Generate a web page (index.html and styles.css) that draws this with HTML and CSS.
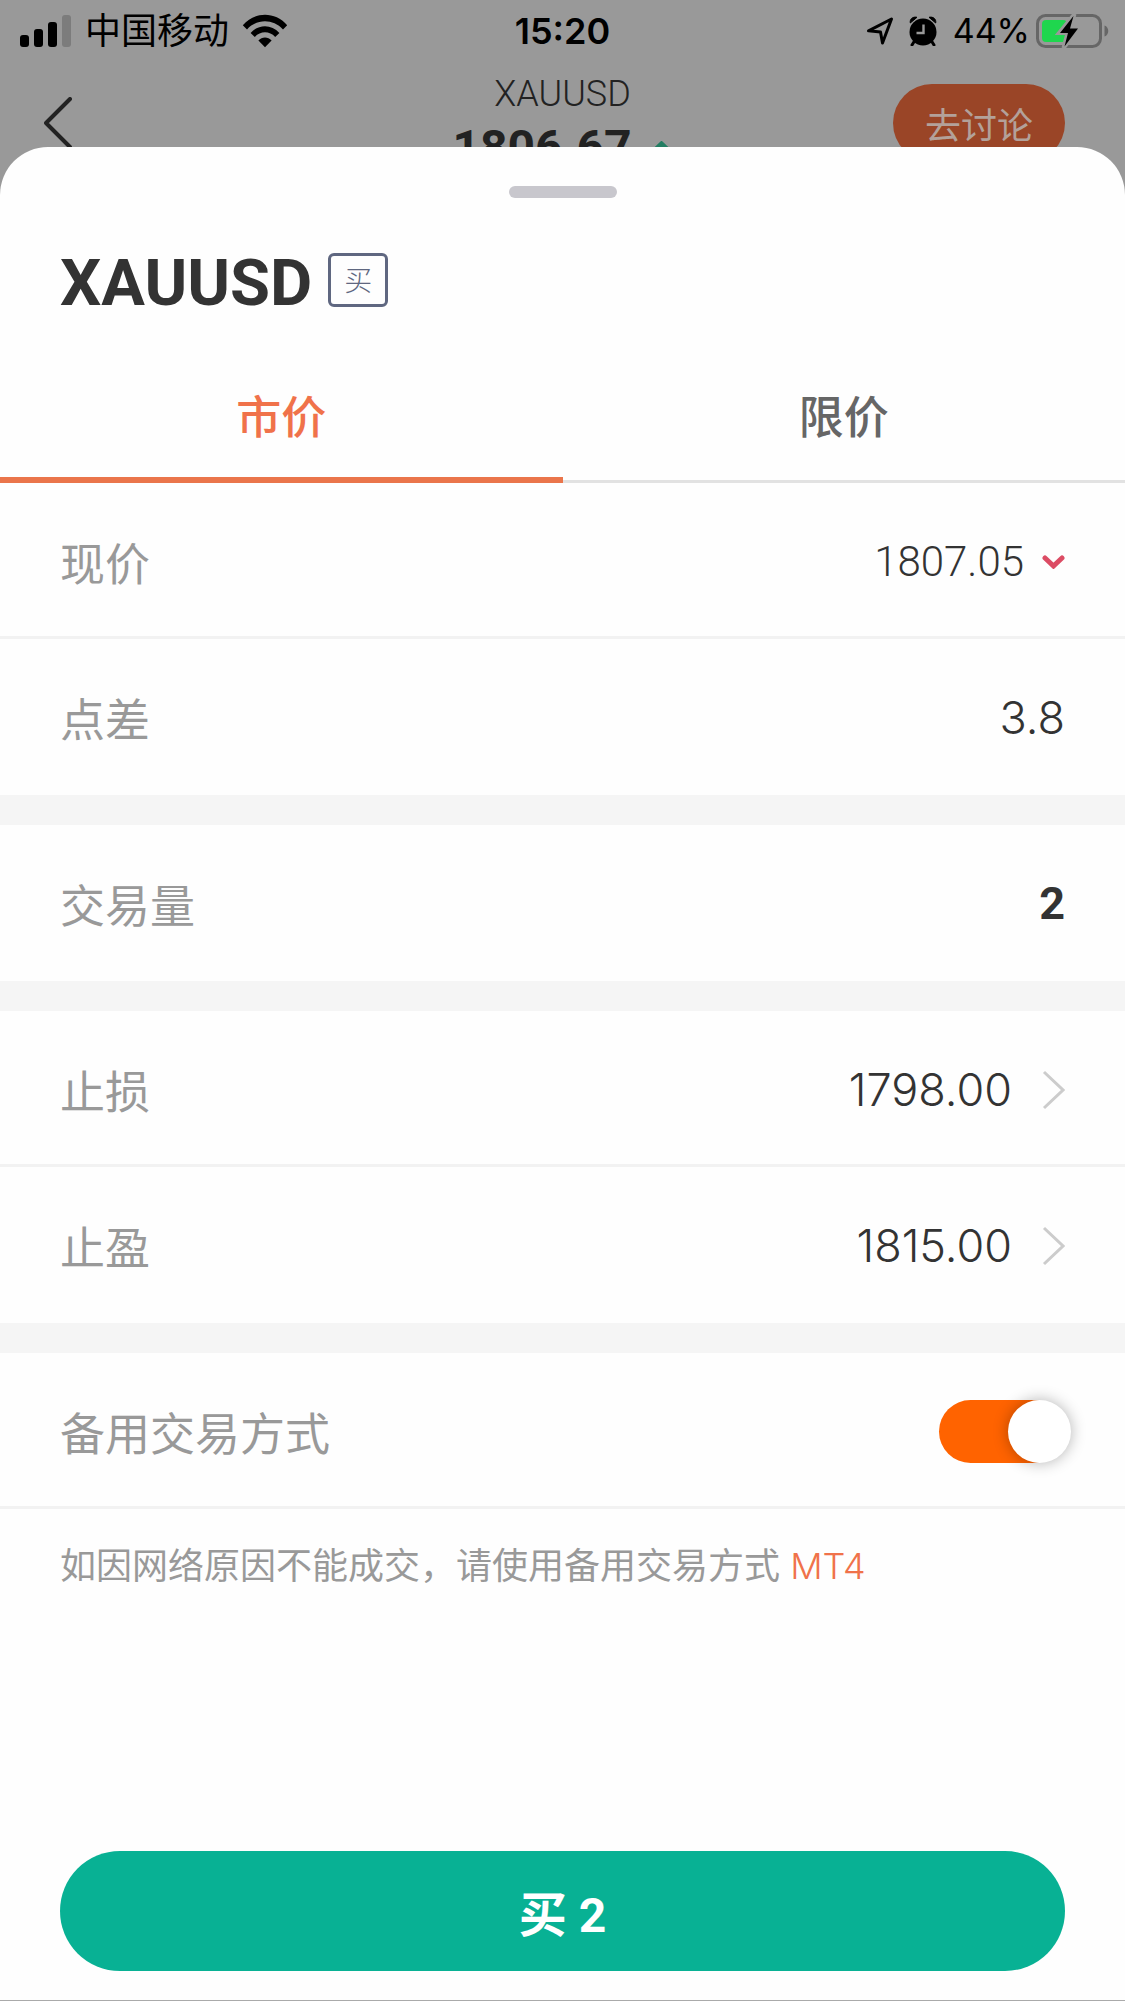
FILE: index.html
```html
<!DOCTYPE html>
<html lang="zh-CN">
<head>
<meta charset="utf-8">
<meta name="viewport" content="width=device-width, initial-scale=1">
<title>XAUUSD 买</title>
<link rel="stylesheet" href="styles.css">
</head>
<body>
<div class="screen">
  <div class="status">
    <div class="status-left">
      <svg width="52" height="34" viewBox="0 0 52 34" aria-hidden="true">
        <rect x="0" y="21" width="9" height="12" rx="3"/>
        <rect x="14" y="15" width="9" height="18" rx="3"/>
        <rect x="28" y="8" width="9" height="25" rx="3"/>
        <rect x="42" y="1" width="9" height="32" rx="3" fill="#7c7c7c"/>
      </svg>
      <span class="carrier">中国移动</span>
      <svg width="46" height="34" viewBox="0 0 46 34" aria-hidden="true">
        <path d="M0.8 11.2C13 -2.6 33 -2.6 45.2 11.2L41 15.4C31 4.6 15 4.6 5 15.4Z"/>
        <path d="M8.6 18.9C16.500 10 29.500 10 37.400 18.900L33.200 23C27.500 16.800 18.500 16.800 12.800 23Z"/>
        <path d="M16.400 26.600C20 22.500 26 22.500 29.600 26.600L23 33.200Z"/>
      </svg>
    </div>
    <span class="clock">15:20</span>
    <div class="status-right">
      <svg width="28" height="30" viewBox="0 0 28 30" aria-hidden="true">
        <path d="M2.500 14.800L25.500 3L16.500 27L14.500 16Z" fill="none" stroke="#000" stroke-width="3" stroke-linejoin="round"/>
      </svg>
      <svg class="alarm" width="28" height="30" viewBox="0 0 28 30" aria-hidden="true">
        <circle cx="14" cy="16" r="13.500"/>
        <path d="M1.300 7C0.500 3 4 0.300 8 1.300ZM26.700 7C27.500 3 24 0.300 20 1.300Z" stroke="#000" stroke-linejoin="round"/>
        <path d="M5.500 25L3 29M22.500 25L25 29" stroke="#000" stroke-width="3" stroke-linecap="round"/>
        <path d="M14.500 8.500V17H7.500" fill="none" stroke="#999" stroke-width="2.400"/>
      </svg>
      <span class="percent">44%</span>
      <svg class="battery" width="74" height="36" viewBox="0 0 74 36" aria-hidden="true">
        <rect x="1.500" y="2.500" width="63" height="31" rx="8" fill="none" stroke="#666" stroke-width="3"/>
        <path d="M68.500 12.500C73.500 14 73.500 22 68.500 23.500Z" fill="#666"/>
        <rect x="6" y="7" width="25" height="22" rx="4" fill="#1fd64e"/>
        <path d="M38.500 1L23 20H31.500L27.500 35L43.500 15H34.500Z" stroke="#999" stroke-width="4"/>
        <path d="M37.500 3L24 20H32L28.500 33.500L42 15.500H34Z"/>
      </svg>
    </div>
  </div>

  <div class="nav">
    <button class="back" type="button" aria-label="返回">
      <svg width="28" height="52" viewBox="0 0 28 52" aria-hidden="true"><path d="M26 2L2 26L26 50" fill="none" stroke="#222" stroke-width="4" stroke-linecap="round" stroke-linejoin="round"/></svg>
    </button>
    <div class="quote">
      <span class="quote-name">XAUUSD</span>
      <span class="quote-price">1806.67
        <svg width="23" height="14" viewBox="0 0 23 14" aria-hidden="true"><path d="M3 11L11.500 3L20 11" fill="none" stroke="#237d62" stroke-width="5" stroke-linecap="round"/></svg>
      </span>
    </div>
    <button class="discuss" type="button">去讨论</button>
  </div>

  <main class="sheet">
    <div class="handle"></div>
    <header class="heading">
      <h1>XAUUSD</h1>
      <span class="side">买</span>
    </header>

    <div class="tabs" role="tablist">
      <button class="tab active" type="button" role="tab" aria-selected="true">市价</button>
      <button class="tab" type="button" role="tab" aria-selected="false">限价</button>
    </div>

    <section class="group">
      <div class="row">
        <span class="label">现价</span>
        <span class="value live">1807.05
          <svg width="23" height="14" viewBox="0 0 23 14" aria-hidden="true"><path d="M3 3L11.500 11L20 3" fill="none" stroke="#dc4c64" stroke-width="5" stroke-linecap="round"/></svg>
        </span>
      </div>
      <div class="row">
        <span class="label">点差</span>
        <span class="value">3.8</span>
      </div>
    </section>

    <section class="group">
      <div class="row">
        <label class="label" for="volume">交易量</label>
        <input class="volume" id="volume" type="text" inputmode="numeric" value="2">
      </div>
    </section>

    <section class="group">
      <button class="row" type="button">
        <span class="label">止损</span>
        <span class="value link">1798.00
          <svg width="23" height="40" viewBox="0 0 23 40" aria-hidden="true"><path d="M2 2L21 20L2 38" fill="none" stroke="#ccc" stroke-width="3"/></svg>
        </span>
      </button>
      <button class="row" type="button">
        <span class="label">止盈</span>
        <span class="value link">1815.00
          <svg width="23" height="40" viewBox="0 0 23 40" aria-hidden="true"><path d="M2 2L21 20L2 38" fill="none" stroke="#ccc" stroke-width="3"/></svg>
        </span>
      </button>
    </section>

    <section class="group last">
      <div class="row">
        <label class="label" for="backup">备用交易方式</label>
        <input class="switch" id="backup" type="checkbox" role="switch" checked>
      </div>
      <p class="note">如因网络原因不能成交，请使用备用交易方式 <a href="#mt4">MT4</a></p>
    </section>

    <footer class="footer">
      <button class="buy" type="button">买 2</button>
    </footer>
  </main>
</div>
</body>
</html>
```
FILE: styles.css
```css
* {
  box-sizing: border-box;
}

body {
  margin: 0;
  background: #999;
  color: #333;
  font-family: Inter, "Noto Sans CJK SC", sans-serif;
  font-size: 45px;
}

button,
input {
  margin: 0;
  padding: 0;
  border: 0;
  background: none;
  color: inherit;
  font: inherit;
}

svg {
  display: block;
  flex: none;
}

.screen {
  display: flex;
  flex-direction: column;
  min-height: 100vh;
}

/* Status bar */
.status {
  display: grid;
  grid-template-columns: 1fr auto 1fr;
  align-items: center;
  height: 62px;
  padding: 0 20px;
  color: #000;
  font-size: 36px;
  line-height: 48px;
}

.status-left,
.status-right {
  display: flex;
  align-items: center;
}

.status-left {
  gap: 13px;
}

.status-right {
  justify-content: flex-end;
  margin-right: -5px;
}

.clock {
  font-weight: 600;
}

.percent {
  font-size: 34px;
}

.alarm {
  margin: 0 16px 0 15px;
}

.battery {
  margin-left: 6px;
}

/* Dimmed page header behind the sheet */
.nav {
  display: grid;
  grid-template-columns: 1fr auto 1fr;
  align-items: center;
  height: 122px;
  padding: 0 60px;
  color: #222;
}

.back,
.discuss {
  cursor: pointer;
}

.back {
  justify-self: start;
  margin-left: -16px;
}

.quote {
  display: flex;
  flex-direction: column;
  align-items: center;
  padding-bottom: 4px;
  font-family: Roboto, sans-serif;
  line-height: 54px;
}

.quote-name {
  font-size: 36px;
  font-weight: 300;
}

.quote-price {
  display: flex;
  align-items: center;
  gap: 18px;
  font-size: 48px;
  font-weight: 700;
}

.discuss {
  justify-self: end;
  height: 78px;
  padding: 0 32px;
  border-radius: 39px;
  background: #9a4527;
  color: #b3a19a;
  font-size: 36px;
}

/* Order sheet */
.sheet {
  position: relative;
  display: flex;
  flex: 1;
  flex-direction: column;
  margin-top: -37px;
  border-bottom: 1px solid #aaa;
  border-radius: 48px 48px 0 0;
  background: #fefefe;
}

.handle {
  width: 108px;
  height: 12px;
  margin: 39px auto 0;
  border-radius: 6px;
  background: #c8c7cd;
}

.heading {
  display: flex;
  align-items: center;
  gap: 16px;
  margin-top: 40px;
  padding: 0 60px;
}

h1 {
  margin: 0;
  padding-top: 6px;
  font-family: Roboto, sans-serif;
  font-size: 65px;
  font-weight: 700;
  line-height: 78px;
}

.side {
  width: 60px;
  height: 54px;
  border: 3px solid #5f6780;
  border-radius: 6px;
  color: #5f6780;
  font-size: 28px;
  font-weight: 300;
  line-height: 50px;
  text-align: center;
}

.tabs {
  display: grid;
  grid-template-columns: 1fr 1fr;
  margin-top: 33px;
}

.tab {
  padding: 33px 0 32px;
  border-bottom: 3px solid #e2e2e2;
  color: #666;
  font-weight: 500;
  line-height: 60px;
  cursor: pointer;
}

.tab.active {
  padding-bottom: 29px;
  border-bottom: 6px solid #ea754b;
  color: #f0724a;
}

.group {
  border-bottom: 30px solid #f5f5f5;
}

.group.last {
  border-bottom: 0;
}

.row {
  display: flex;
  align-items: center;
  justify-content: space-between;
  width: 100%;
  height: 156px;
  padding: 4px 60px 0;
  border-bottom: 3px solid #f2f2f2;
}

.row:last-child {
  border-bottom-color: transparent;
}

button.row {
  cursor: pointer;
}

.label {
  color: #999;
}

.value {
  display: flex;
  align-items: center;
  font-weight: 300;
}

.live {
  gap: 18px;
  font-family: Roboto, sans-serif;
  font-size: 42px;
}

.link {
  gap: 30px;
}

.volume {
  width: 240px;
  font-family: Roboto, sans-serif;
  font-weight: 700;
  text-align: right;
}

.switch {
  width: 126px;
  height: 63px;
  border-radius: 32px;
  background: #ff6300;
  appearance: none;
  cursor: pointer;
}

.switch::before {
  display: block;
  width: 63px;
  height: 63px;
  border-radius: 50%;
  background: #fff;
  box-shadow: 0 0 15px rgba(0, 0, 0, 0.3);
  content: "";
}

.switch:checked::before {
  margin-left: 69px;
}

.note {
  margin: 0;
  padding: 30px 60px;
  color: #999;
  font-size: 36px;
  line-height: 54px;
}

.note a {
  color: #f0724a;
  font-weight: 300;
  text-decoration: none;
}

.footer {
  margin-top: auto;
  padding: 0 60px 29px;
}

.buy {
  width: 100%;
  height: 120px;
  border-radius: 60px;
  background: #08b194;
  color: #fff;
  font-family: Roboto, "Noto Sans CJK SC", sans-serif;
  font-size: 48px;
  font-weight: 700;
  cursor: pointer;
}
```
